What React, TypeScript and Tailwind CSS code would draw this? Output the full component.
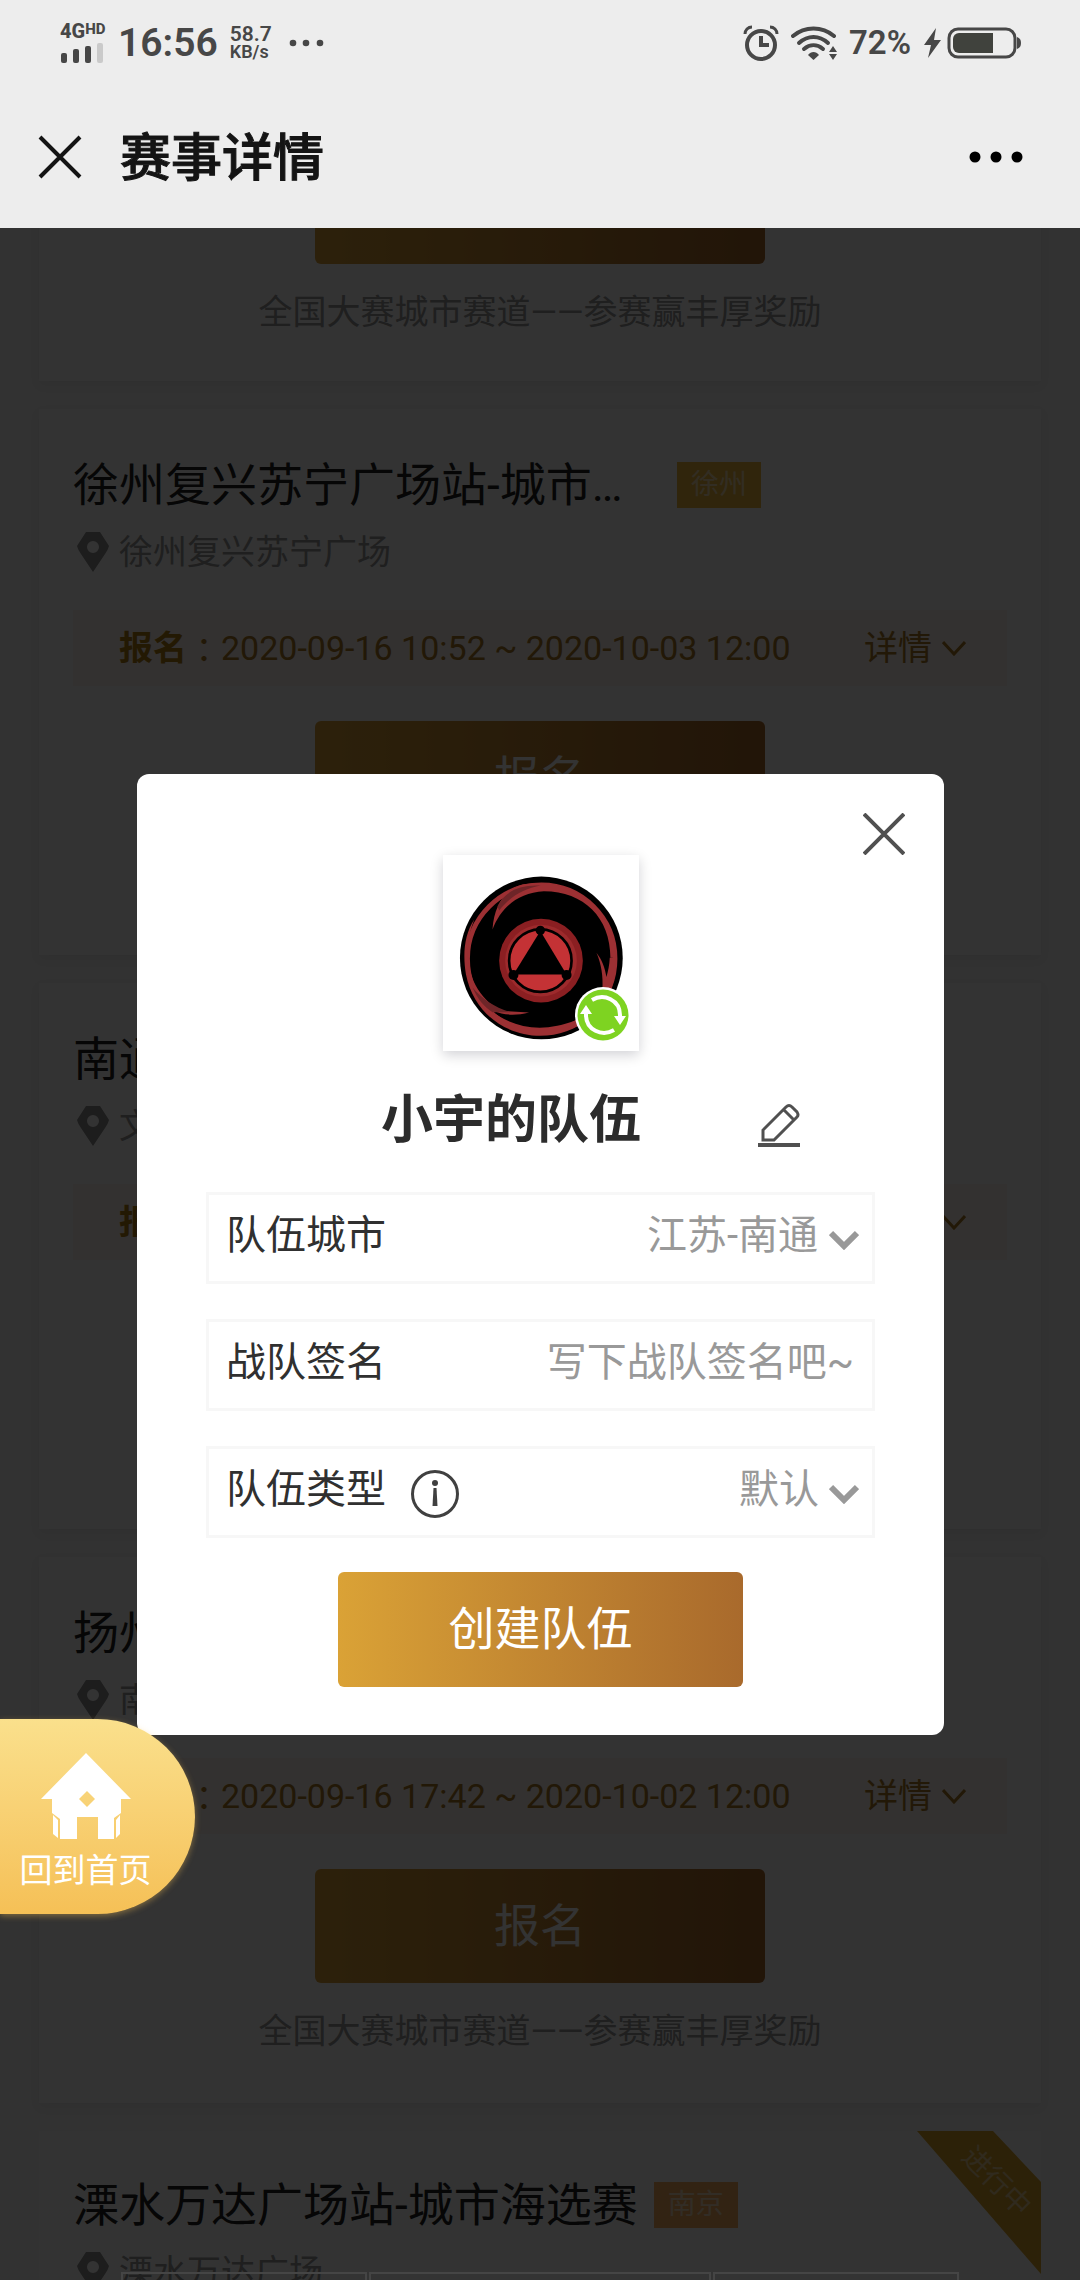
import { useState } from 'react'

const partidas = [
  {
    titulo: '徐州复兴苏宁广场站-城市海选赛',
    ciudad: '徐州',
    lugar: '徐州复兴苏宁广场',
    fecha: '2020-09-16 10:52 ~ 2020-10-03 12:00',
  },
  {
    titulo: '南通站-城市海选赛',
    ciudad: '南通',
    lugar: '文峰广场',
    fecha: '2020-09-16 17:42 ~ 2020-10-02 12:00',
  },
  {
    titulo: '扬州站-城市海选赛',
    ciudad: '扬州',
    lugar: '南门广场',
    fecha: '2020-09-16 17:42 ~ 2020-10-02 12:00',
  },
]

function StatusBar() {
  return (
    <div className="flex h-[86px] items-center justify-between pl-[60px] pr-[59px] text-[#474747]">
      <div className="flex items-center">
        <div className="flex w-[46px] flex-col gap-1">
          <div className="flex items-start font-extrabold leading-4">
            <span className="text-[20px]">4G</span>
            <span className="text-[15px] leading-3">HD</span>
          </div>
          <svg width="44" height="20" viewBox="0 0 44 20">
            <rect x="1" y="10" width="6" height="10" rx="2" fill="#474747" />
            <rect x="13" y="6" width="6" height="14" rx="2" fill="#474747" />
            <rect x="25" y="3" width="6" height="17" rx="2" fill="#474747" />
            <rect x="37" y="0" width="6" height="20" rx="2" fill="#cacaca" />
          </svg>
        </div>
        <span className="ml-3 text-[39px] font-semibold leading-10">16:56</span>
        <div className="ml-3 flex flex-col font-semibold leading-[18px]">
          <span className="text-[21px]">58.7</span>
          <span className="text-[18px]">KB/s</span>
        </div>
        <svg className="ml-4" width="36" height="8" viewBox="0 0 36 8" fill="#474747">
          <circle cx="5" cy="4" r="3.3" />
          <circle cx="18" cy="4" r="3.3" />
          <circle cx="32" cy="4" r="3.3" />
        </svg>
      </div>

      <div className="flex items-center">
        <svg width="36" height="36" viewBox="0 0 36 36" fill="none" stroke="#474747">
          <circle cx="18" cy="20" r="14" strokeWidth="4" />
          <path d="M18 11v9h8" strokeWidth="4" />
          <path d="M2 9C2 5 5 2 9 2M27 2c4 0 7 3 7 7" strokeWidth="3" />
        </svg>
        <svg className="ml-3" width="46" height="36" viewBox="0 0 46 36" fill="none" stroke="#474747" strokeWidth="4" strokeLinecap="round">
          <path d="M2 11C14 1 31 1 43 11" />
          <path d="M8 18c9-8 20-8 29 0" />
          <path d="M13 24c6-5 13-5 19 0" />
          <path d="M17 30c3-4 8-4 11 0l-5.500 5z" fill="#474747" stroke="none" />
          <path d="M42 21l4 6h-8zM42 35l4-6h-8z" fill="#474747" stroke="none" />
        </svg>
        <span className="ml-3 text-[33px] font-semibold leading-9">72%</span>
        <svg className="ml-3" width="20" height="30" viewBox="0 0 20 30" fill="#474747">
          <path d="M13 0L1 17h7L5 30l13-18h-7z" />
        </svg>
        <svg className="ml-1" width="74" height="32" viewBox="0 0 74 32">
          <rect x="2" y="2" width="66" height="28" rx="9" fill="none" stroke="#474747" strokeWidth="3" />
          <path d="M12 6h34v20H12a6 6 0 0 1-6-6v-8a6 6 0 0 1 6-6z" fill="#40423d" />
          <path d="M70 10c3 1 4 3 4 6s-1 5-4 6z" fill="#474747" />
        </svg>
      </div>
    </div>
  )
}

function NavBar() {
  return (
    <div className="flex h-[142px] items-center pl-[38px] pr-[56px]">
      <button aria-label="关闭页面">
        <svg width="44" height="44" viewBox="0 0 44 44" stroke="#141414" strokeWidth="4">
          <path d="M2 2l40 40M42 2L2 42" />
        </svg>
      </button>
      <h1 className="ml-[38px] flex-1 pt-1 text-[51px] font-medium leading-[60px] text-[#141414] [-webkit-text-stroke:1px_#141414]">
        赛事详情
      </h1>
      <button aria-label="更多">
        <svg width="56" height="12" viewBox="0 0 56 12">
          <circle cx="7" cy="6" r="5.500" />
          <circle cx="28" cy="6" r="5.500" />
          <circle cx="49" cy="6" r="5.500" />
        </svg>
      </button>
    </div>
  )
}

function Pin() {
  return (
    <svg width="32" height="40" viewBox="0 0 32 40">
      <path
        d="M9 0h14l9 14q-1 4-4 8L16 40 4 22q-3-4-4-8zM16 9a6 6 0 1 0 0 12 6 6 0 0 0 0-12z"
        fill="#909090"
        fillRule="evenodd"
      />
    </svg>
  )
}

function SignUp() {
  return (
    <>
      <button className="mx-auto block h-[114px] w-[450px] rounded-md bg-linear-to-r from-[#dca238] to-[#a8692b] text-[46px] text-white">
        报名
      </button>
      <p className="mt-7 text-center text-[34px] leading-10 text-[#999]">
        全国大赛城市赛道——参赛赢丰厚奖励
      </p>
    </>
  )
}

function Heading({ titulo, ciudad, lugar, color }: any) {
  return (
    <>
      <div className="flex items-center gap-4">
        <h3 className="max-w-[588px] truncate text-[46px] leading-[60px] text-[#222]">
          {titulo}
        </h3>
        <span className={`${color} px-[14px] text-[28px] leading-[46px] text-white/60`}>
          {ciudad}
        </span>
      </div>
      <div className="mt-[17px] flex items-center gap-[10px] pl-1">
        <Pin />
        <span className="text-[34px] leading-10 text-[#999]">{lugar}</span>
      </div>
    </>
  )
}

function Card({ item }: any) {
  return (
    <article className="h-[546px] bg-white px-[34px] pt-[46px] shadow-[0_4px_10px_rgba(0,0,0,0.06)]">
      <Heading {...item} color="bg-[#f0b93e]" />

      <div className="mb-[35px] mt-[38px] flex h-[76px] items-center bg-[#fff4ee] pl-[46px] pr-[41px] text-[34px] text-[#a87824]">
        <b className="text-[#b07c10]">报名</b>
        <span className="font-['Noto_Sans_CJK_TC',sans-serif]">：</span>
        <span className="whitespace-nowrap">{item.fecha}</span>
        <button className="ml-auto flex items-center gap-[10px]">
          详情
          <svg width="24" height="16" viewBox="0 0 24 16" fill="none" stroke="currentColor" strokeWidth="3">
            <path d="M1 2l11 12L23 2" />
          </svg>
        </button>
      </div>

      <SignUp />
    </article>
  )
}

function Avatar() {
  return (
    <svg width="196" height="196" viewBox="66 46 590 590">
      <circle cx="362" cy="356" r="245" fill="#000" />
      <circle cx="362" cy="358" r="222" fill="none" stroke="#9c3033" strokeWidth="14" />
      <path d="M215 270c5-70 35-120 90-135 100-20 200 20 250 110 15 30 30 70 30 110l-15 0c0-120-80-200-200-200-80 5-130 50-155 115z" fill="#9c3033" />
      <path d="M230 200c20-40 60-65 130-62-50 10-90 30-125 75z" fill="#6e2528" />
      <path d="M160 240c-40 100-20 220 80 275l85 5c-60 15-110 5-150-35 60 60 140 95 235 75 40-8 70-20 95-45l5 20c-130 110-340 50-375-130-10-60-5-120 25-165z" fill="#9c3033" />
      <path d="M155 445c30 35 65 60 115 74l-55 0c-25-15-45-40-60-74z" fill="#6e2528" />
      <path d="M528 340c15 35 20 70 18 110h26c12-30 14-60 12-95l-16 0c-1 22-5 40-10 58-5-30-14-52-30-73z" fill="#9c3033" />
      <circle cx="361" cy="364" r="126" fill="#8b1f22" />
      <circle cx="361" cy="364" r="108" fill="#9d2a2c" />
      <circle cx="359" cy="364" r="94" fill="#c43235" stroke="#000" strokeWidth="8" />
      <path d="M359 275L278 406h160z" fill="#000" />
      <circle cx="359" cy="273" r="14" />
      <circle cx="278" cy="407" r="15" />
      <circle cx="438" cy="407" r="15" />
    </svg>
  )
}

function Caret() {
  return (
    <svg className="mt-2 ml-[10px]" width="30" height="20" viewBox="0 0 30 20" fill="none" stroke="#999" strokeWidth="6">
      <path d="M2 3l13 13L28 3" />
    </svg>
  )
}

function TeamDialog() {
  const [firma, setFirma] = useState('')

  return (
    <section role="dialog" aria-label="创建队伍" className="w-full rounded-xl bg-white pb-12 pt-[39px]">
      <div className="flex justify-end px-[39px]">
        <button aria-label="关闭">
          <svg className="block" width="42" height="42" viewBox="0 0 42 42" stroke="#505050" strokeWidth="4">
            <path d="M1 1l40 40M41 1L1 41" />
          </svg>
        </button>
      </div>

      <div className="relative mx-auto w-[196px] shadow-[0_4px_12px_rgba(0,0,30,0.18)]">
        <Avatar />
        <button aria-label="更换头像" className="absolute bottom-[8px] right-[8px]">
          <svg className="block" width="56" height="56" viewBox="0 0 56 56">
            <circle cx="28" cy="28" r="28" fill="#fff" />
            <circle cx="28" cy="28" r="25.500" fill="#7ed321" />
            <g fill="none" stroke="#fff" strokeWidth="4">
              <path d="M17 13c12-7 28 0 28 15v2" />
              <path d="M39 43c-12 7-28 0-28-15v-2" />
            </g>
            <path d="M39 29h12l-6 9zM5 27h12l-6-9z" fill="#fff" />
          </svg>
        </button>
      </div>

      <div className="px-[69px]">
        <div className="mt-[38px] flex items-center justify-between pl-[175px] pr-[75px]">
          <h2 className="text-[52px] font-bold leading-[64px] text-[#2c2c2c]">小宇的队伍</h2>
          <button aria-label="修改队名" className="mt-2">
            <svg className="block" width="42" height="44" viewBox="0 0 42 44" fill="none" stroke="#505050" strokeWidth="3">
              <path d="M5 37V27L28 4q3-3 6 0l5 5q2 3 0 5L16 37zM26 7l10 10" />
              <path d="M0 42h42" strokeWidth="4" />
            </svg>
          </button>
        </div>

        <div className="mt-[39px] flex flex-col gap-[35px] text-[40px] text-[#999]">
          <div className="flex h-[92px] items-center border-[3px] border-[#f7f7f7] pb-1 pl-[17px] pr-[13px]">
            <label htmlFor="city" className="flex-1 text-[#303030]">队伍城市</label>
            <select id="city" className="appearance-none bg-transparent">
              <option>江苏-南通</option>
            </select>
            <Caret />
          </div>

          <div className="flex h-[92px] items-center border-[3px] border-[#f7f7f7] pb-1 pl-[17px] pr-[18px]">
            <label htmlFor="firma" className="text-[#303030]">战队签名</label>
            <input
              id="firma"
              value={firma}
              onChange={(e) => setFirma(e.target.value)}
              placeholder="写下战队签名吧~"
              className="min-w-0 flex-1 bg-transparent text-right placeholder:text-[#999]"
            />
          </div>

          <div className="flex h-[92px] items-center border-[3px] border-[#f7f7f7] pb-1 pl-[17px] pr-[13px]">
            <label htmlFor="tipo" className="text-[#303030]">队伍类型</label>
            <button aria-label="类型说明" className="ml-6 mr-auto mt-2">
              <svg className="block" width="50" height="50" viewBox="0 0 50 50">
                <circle cx="25" cy="25" r="22.500" fill="none" stroke="#404040" strokeWidth="3" />
                <circle cx="25" cy="14" r="3" fill="#404040" />
                <path d="M23.500 19h3l1 18h-5z" fill="#404040" />
              </svg>
            </button>
            <select id="tipo" className="appearance-none bg-transparent">
              <option>默认</option>
            </select>
            <Caret />
          </div>
        </div>

        <button className="mx-auto mt-[34px] block h-[115px] w-[405px] rounded-md bg-linear-to-r from-[#daa236] to-[#a96a2c] text-[46px] text-white">
          创建队伍
        </button>
      </div>
    </section>
  )
}

function HomeLink() {
  return (
    <a
      href="#"
      className="absolute bottom-[366px] left-0 flex h-[195px] w-[195px] flex-col items-center rounded-r-full bg-linear-to-b from-[#fae08c] to-[#f5c056] pr-[24px] pt-[34px] shadow-[0_2px_6px_rgba(245,192,86,0.4)]"
    >
      <svg width="90" height="88" viewBox="0 0 90 88" fill="#fff">
        <path d="M45 0L90 46H80V60l-7 5V86H57V64H36V86H19V66l-8-6V46H0zM46 38l-8 8 8 8 8-8z" fillRule="evenodd" />
        <path d="M12 62l5 5v18l-5-4zM79 62l-4 5v18l4-4z" />
      </svg>
      <span className="mt-[10px] text-[33px] leading-10 text-white">回到首页</span>
    </a>
  )
}

export default function App() {
  return (
    <div className="flex h-screen flex-col overflow-hidden bg-[#f7f7f7] font-['Roboto','Noto_Sans_CJK_SC',sans-serif]">
      <header className="shrink-0 bg-[#ededed]">
        <StatusBar />
        <NavBar />
      </header>

      <main className="relative min-h-0 flex-1 overflow-hidden">
        <div className="-mt-[78px] flex flex-col gap-7 px-[39px]">
          <div className="h-[231px] bg-white shadow-[0_4px_10px_rgba(0,0,0,0.06)]">
            <SignUp />
          </div>

          {partidas.map((item) => (
            <Card key={item.titulo} item={item} />
          ))}

          <article className="relative h-[546px] bg-white px-[34px] pt-11">
            <Heading
              titulo="溧水万达广场站-城市海选赛"
              ciudad="南京"
              lugar="溧水万达广场"
              color="bg-[#f7b060]"
            />
            <svg className="absolute right-0 top-0" width="124" height="143" viewBox="0 0 124 143">
              <path d="M0 0h76l48 51v92z" fill="#dca62c" />
              <text x="80" y="60" fill="#fff" fillOpacity="0.5" fontSize="28" textAnchor="middle" transform="rotate(45 80 50)">
                进行中
              </text>
            </svg>
          </article>
        </div>

        {/* mask + dialog */}
        <div className="absolute inset-0 flex items-center justify-center bg-black/80 pl-[137px] pr-[136px]">
          <TeamDialog />
        </div>

        <div className="absolute inset-x-[121px] bottom-0 flex h-2 gap-[2px]">
          <div className="flex-[5] border-x-2 border-t-2 border-[#454545]" />
          <div className="flex-[7] border-x-2 border-t-2 border-[#454545]" />
          <div className="flex-[5] border-x-2 border-t-2 border-[#454545]" />
        </div>

        <HomeLink />
      </main>
    </div>
  )
}
